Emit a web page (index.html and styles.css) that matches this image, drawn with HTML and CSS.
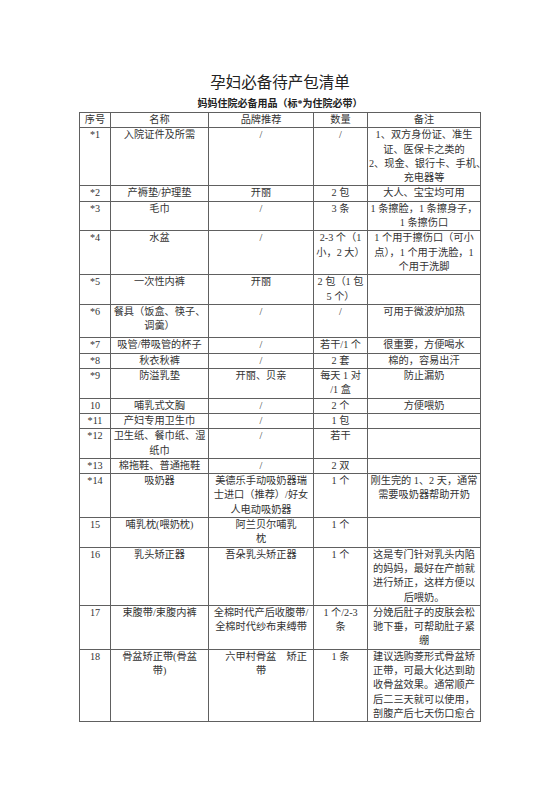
FILE: index.html
```html
<!DOCTYPE html>
<html lang="zh-CN">
<head>
<meta charset="utf-8">
<title>孕妇必备待产包清单</title>
<link rel="stylesheet" href="styles.css">
</head>
<body>
<div class="doc">
  <h1 class="title">孕妇必备待产包清单</h1>
  <p class="subtitle">妈妈住院必备用品（标*为住院必带）</p>
  <table class="list">
    <colgroup>
      <col class="c-no"><col class="c-name"><col class="c-brand"><col class="c-qty"><col class="c-note">
    </colgroup>
    <tbody>
      <tr><td>序号</td><td>名称</td><td>品牌推荐</td><td>数量</td><td>备注</td></tr>
      <tr><td>*1</td><td>入院证件及所需</td><td>/</td><td>/</td><td>1、双方身份证、准生<br>证、医保卡之类的<br>2、现金、银行卡、手机、<br>充电器等</td></tr>
      <tr><td>*2</td><td>产褥垫/护理垫</td><td>开丽</td><td>2 包</td><td>大人、宝宝均可用</td></tr>
      <tr><td>*3</td><td>毛巾</td><td>/</td><td>3 条</td><td>1 条擦脸，1 条擦身子，<br>1 条擦伤口</td></tr>
      <tr><td>*4</td><td>水盆</td><td>/</td><td>2-3 个（1<br>小，2 大）</td><td>1 个用于擦伤口（可小<br>点），1 个用于洗脸，1<br>个用于洗脚</td></tr>
      <tr><td>*5</td><td>一次性内裤</td><td>开丽</td><td>2 包（1 包<br>5 个）</td><td></td></tr>
      <tr class="tall"><td>*6</td><td>餐具（饭盒、筷子、<br>调羹）</td><td>/</td><td>/</td><td>可用于微波炉加热</td></tr>
      <tr><td>*7</td><td>吸管/带吸管的杯子</td><td>/</td><td>若干/1 个</td><td>很重要，方便喝水</td></tr>
      <tr><td>*8</td><td>秋衣秋裤</td><td>/</td><td>2 套</td><td>棉的，容易出汗</td></tr>
      <tr><td>*9</td><td>防溢乳垫</td><td>开丽、贝亲</td><td>每天 1 对<br>/1 盒</td><td>防止漏奶</td></tr>
      <tr><td>10</td><td>哺乳式文胸</td><td>/</td><td>2 个</td><td>方便喂奶</td></tr>
      <tr><td>*11</td><td>产妇专用卫生巾</td><td>/</td><td>1 包</td><td></td></tr>
      <tr><td>*12</td><td>卫生纸、餐巾纸、湿<br>纸巾</td><td>/</td><td>若干</td><td></td></tr>
      <tr><td>*13</td><td>棉拖鞋、普通拖鞋</td><td>/</td><td>2 双</td><td></td></tr>
      <tr><td>*14</td><td>吸奶器</td><td>美德乐手动吸奶器瑞<br>士进口（推荐）/好女<br>人电动吸奶器</td><td>1 个</td><td>刚生完的 1、2 天，通常<br>需要吸奶器帮助开奶</td></tr>
      <tr><td>15</td><td>哺乳枕(喂奶枕)</td><td>&#12288;阿兰贝尔哺乳<br>枕&#12288;</td><td>1 个</td><td></td></tr>
      <tr><td>16</td><td>乳头矫正器</td><td>吾朵乳头矫正器</td><td>1 个</td><td>这是专门针对乳头内陷<br>的妈妈，最好在产前就<br>进行矫正，这样方便以<br>后喂奶。</td></tr>
      <tr><td>17</td><td>束腹带/束腹内裤</td><td>全棉时代产后收腹带/<br>全棉时代纱布束缚带</td><td>1 个/2-3<br>条</td><td>分娩后肚子的皮肤会松<br>驰下垂，可帮助肚子紧<br>绷</td></tr>
      <tr><td>18</td><td>骨盆矫正带(骨盆<br>带)</td><td>&#12288;六甲村骨盆&#12288;矫正<br>带&#12288;</td><td>1 条</td><td>建议选购菱形式骨盆矫<br>正带，可最大化达到助<br>收骨盆效果。通常顺产<br>后二三天就可以使用，<br>剖腹产后七天伤口愈合</td></tr>
    </tbody>
  </table>
</div>
</body>
</html>
```

FILE: styles.css
```css
html, body {
  margin: 0;
  padding: 0;
  background: #ffffff;
}

.doc {
  width: 560px;
  padding-top: 73px;
  font-family: "Liberation Serif", "Noto Sans CJK SC", serif;
  color: #333333;
}

.title {
  margin: 0;
  font-size: 15.5px;
  line-height: 20px;
  font-weight: normal;
  text-align: center;
  color: #222222;
}

.subtitle {
  margin: 4px 0 1px 0;
  font-size: 10px;
  line-height: 14px;
  font-weight: bold;
  text-align: center;
  color: #222222;
}

.list {
  margin-left: 79px;
  width: 401px;
  table-layout: fixed;
  border-collapse: collapse;
  font-size: 10.2px;
  line-height: 14.3px;
}

.c-no { width: 31px; }
.c-name { width: 98px; }
.c-brand { width: 105px; }
.c-qty { width: 54px; }
.c-note { width: 113px; }

.list td {
  border: 1px solid #606060;
  padding: 0 1px;
  text-align: center;
  vertical-align: top;
  white-space: nowrap;
  overflow: visible;
}

.list tr.tall td {
  padding-bottom: 4px;
}
```
